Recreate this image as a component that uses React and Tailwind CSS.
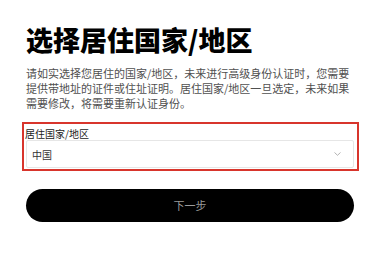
import React from "react";

const cjk = { fontFamily: '"Noto Sans CJK SC", "Noto Sans", sans-serif' };

export default function App() {
  return (
    <div className="w-[382px] h-[256px] bg-white overflow-hidden" style={cjk}>
      <div className="pl-[26px] pt-[24px] w-[354px]">
        <h1 className="text-[27px] leading-[32px] font-black text-black">
          选择居住国家/地区
        </h1>
        <p className="mt-[10px] text-[11px] leading-[15px] text-[#505050] max-w-[324px]">
          请如实选择您居住的国家/地区，未来进行高级身份认证时，您需要提供带地址的证件或住址证明。居住国家/地区一旦选定，未来如果需要修改，将需要重新认证身份。
        </p>

        <div className="mt-[11px] -ml-[4px] -mr-[5px] border-2 border-[#d8352c] pl-[1px] pr-[3px] pt-[3px] pb-[1px]">
          <label className="block text-[10px] leading-[13px] text-[#222]">居住国家/地区</label>
          <div className="ml-[1px] h-[28px] flex items-center justify-between border border-[#e6e6e6] rounded-[2px] pl-[5px] pr-[12px]">
            <span className="text-[10px] text-[#333]">中国</span>
            <svg width="7" height="4" viewBox="0 0 7 4" fill="none">
              <path d="M0.5 0.5L3.5 3.3L6.5 0.5" stroke="#aaa" strokeWidth="0.9" />
            </svg>
          </div>
        </div>

        <button className="mt-[18px] w-[328px] h-[33px] rounded-full bg-black text-[11px] text-[#9a9a9a] flex items-center justify-center">
          下一步
        </button>
      </div>
    </div>
  );
}
